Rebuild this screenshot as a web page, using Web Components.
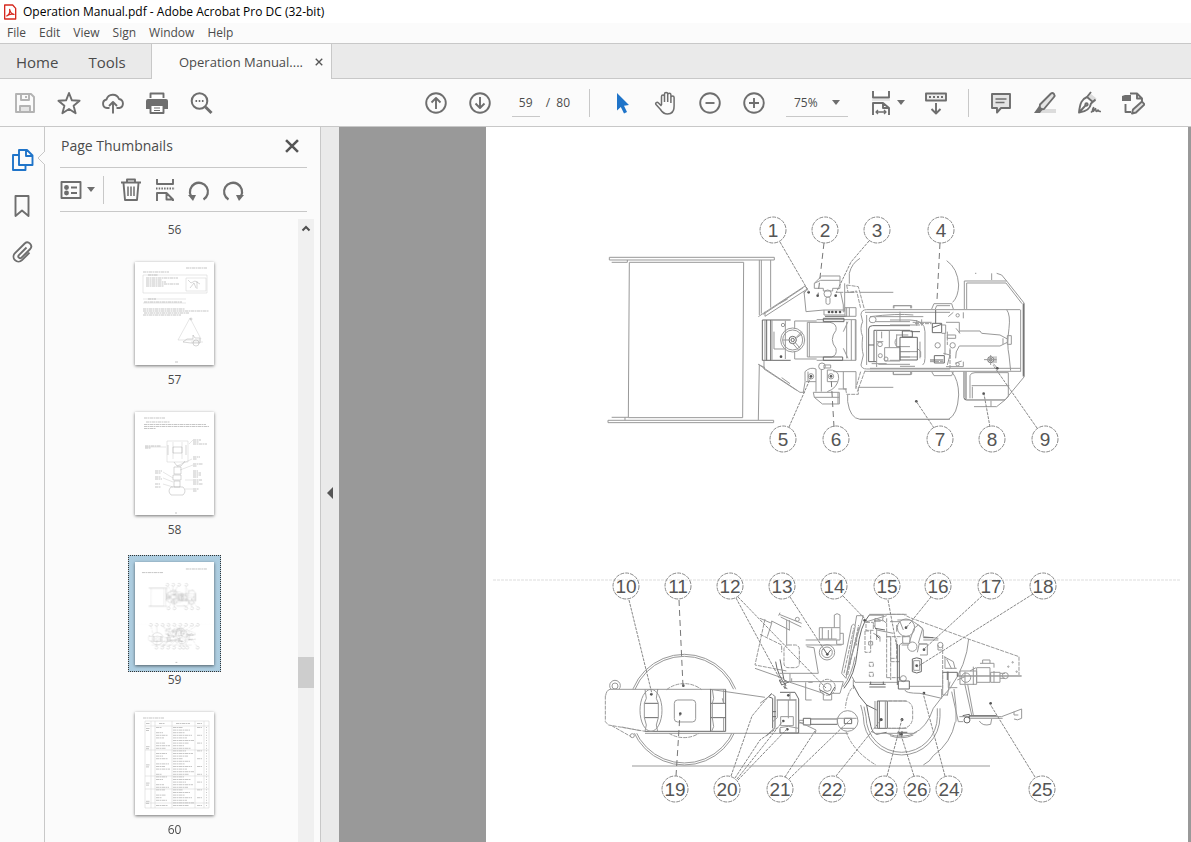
<!DOCTYPE html>
<html lang="en">
<head>
<meta charset="utf-8">
<title>Operation Manual.pdf - Adobe Acrobat Pro DC (32-bit)</title>
<style>
    html, body { margin: 0; height: 100%; }
    body {
        overflow: hidden;
        background: #fff;
        color: #4b4b4b;
        font-family: "Open Sans", "Noto Sans", sans-serif;
        font-size: 12px;
        --line: #c8c8c8;
        --bar: #fbfbfb;
        --grey: #eaeaea;
        --icon: #6e6e6e;
        --blue: #1f74c9;
    }
</style>
</head>
<body>
<reader-app></reader-app>

<script>
// 24x24 icons, stroke = currentColor unless told otherwise
const ICONS = {
    pdf: `<path d="M4 1.5h12l4.500 5V22.500H4z" fill="#fff" stroke="#d6281e" stroke-width="2"/><path d="M7 18c4-2 5-6 4.500-10 1 5 3 7 6.500 7.500-4-1-8 0-11 2.500z" stroke="#d6281e" stroke-width="1.800"/>`,
    save: `<path d="M3 3h15l3 3v15H3z"/><path d="M7 21v-6h10v6z" fill="#e4e4e4"/><path d="M8 3v6h8V3M13 5v2"/>`,
    star: `<path d="M12 2l2.900 7.300 7.700.500-6 5 2 7.500L12 18l-6.600 4.300 2-7.500-6-5 7.700-.500z"/>`,
    cloud: `<path d="M8.500 17H6a4.300 4.300 0 0 1-.500-8.500A6.600 6.600 0 0 1 18 8a4.600 4.600 0 0 1 .500 9h-3M12 22.500V11M8 15l4-4 4 4"/>`,
    print: `<path d="M5.500 7V2.500h13V7" fill="#fff"/><path d="M3 8h18q2 0 2 2v8H1v-8q0-2 2-2z" fill="currentColor" stroke="none"/><path d="M5.500 14h13v8h-13z" fill="#fff"/><path d="M9 17h6M9 19.500h6" stroke-width="1.200"/>`,
    search: `<circle cx="10.500" cy="10" r="7.800" stroke-width="2"/><path d="M16.500 16l6 6" stroke-width="3"/><path d="M6.500 10h1.600M9.700 10h1.600M12.900 10h1.600" stroke-width="1.800"/>`,
    up: `<circle cx="12" cy="12" r="9.800"/><path d="M12 18V7M7.500 11.500L12 7l4.500 4.500"/>`,
    down: `<circle cx="12" cy="12" r="9.800"/><path d="M12 6v11M7.500 12.500L12 17l4.500-4.500"/>`,
    cursor: `<path d="M7 2v17.500l3.800-3.600 3.200 6.600 3-1.500-3-6.300 5-.800z" fill="#1f74c9" stroke="none"/>`,
    hand: `<path d="M7.500 14V5.500a1.500 1.500 0 0 1 3 0V11M10.500 11V3a1.600 1.600 0 0 1 3.200 0v8M13.700 11V3.800a1.600 1.600 0 0 1 3.200 0V12M16.900 12V6.500a1.600 1.600 0 0 1 3.200 0v8.500c0 5-2.600 8-6.600 8-3.500 0-5-1.200-7-4.500L2 13.500c-1-1.600 1-3 2.500-1.500L7.500 15" stroke-width="1.500"/>`,
    minus: `<circle cx="12" cy="12" r="9.800"/><path d="M7.500 12h9"/>`,
    plus: `<circle cx="12" cy="12" r="9.800"/><path d="M7 12h10M12 7v10"/>`,
    fit: `<path d="M4 0v6.500h16V0" fill="#fff"/><path d="M3 9h18" stroke="#e4e4e4" stroke-width="2"/><path d="M4 24V12h10l6 5v7M14 12v5h6" /><path d="M7 21h10M9 19l-2 2 2 2M15 19l2 2-2 2" stroke-width="1.300"/>`,
    scroll: `<path d="M2 2.500h20v7H2z" fill="#eee"/><path d="M5 6h14" stroke-dasharray="2 2" stroke-width="2"/><path d="M12 12v10M7.500 18l4.500 4.500 4.500-4.500"/>`,
    comment: `<path d="M3 3h18v14h-9l-4 4.500V17H3z" fill="#e4e4e4"/><path d="M6.500 8h11M6.500 11.500h9" stroke-width="1.300"/>`,
    marker: `<path d="M8 18h15v4H5z" fill="#dcdcdc" stroke="none"/><path d="M7 13.500L18 2.500q1.500-1 3 .500 1.200 1.500 0 3L11 18l-4.500.500z" fill="#e4e4e4"/><path d="M6 15l4 3-3 4H1z" fill="currentColor" stroke="none"/>`,
    sign: `<path d="M14 3l5.500 4.500-1.500 4-7-6z" fill="#dcdcdc" stroke="none"/><path d="M14 1l-4 5C5 8 3 12 2 21.500c7-1 11-3 12-9l4.500-4M10 6l6.500 5.500M2 21.500l6.500-7"/><path d="M14 21.500c2-2 3-5 2.500-5S15 20.500 16 20.500s2-3 2.500-3 0 3 1 3 1-1.500 1.500-1.500 0 2 3 1.500" stroke-width="1.600"/><circle cx="9.500" cy="13.500" r="1.200"/>`,
    edit: `<path d="M9 2.500h7l5 5V10M16 2.500v5h5M4.500 13v8H10"/><path d="M1 5l3-1h6v6H1z" fill="currentColor" stroke="none"/><path d="M11 22.500l1-4 9-8 2.500 3-8.500 8z" fill="#e4e4e4"/>`,
    pages: `<path d="M9 2h8l5.500 5.500V17H9zM16 2v6h6"/><path d="M9 7H3v15h12.500v-5"/>`,
    bookmark: `<path d="M5.500 2h13v20L12 16.500 5.500 22z"/>`,
    clip: `<path d="M16.500 7.500l-7.600 7.600a1.800 1.800 0 0 0 2.600 2.600l8.700-8.700a3.900 3.900 0 0 0-5.500-5.500L5 13.200a4.900 4.900 0 0 0 7 7l7.500-7.500"/>`,
    close: `<path d="M5.500 5.500l13 13M18.500 5.500l-13 13" stroke-width="2.800"/>`,
    list: `<path d="M2.500 4h19v16h-19z"/><circle cx="7.500" cy="9.500" r="1.500" fill="currentColor"/><circle cx="7.500" cy="15" r="1.500" fill="currentColor"/><path d="M12 9.500h6M12 15h6"/>`,
    trash: `<path d="M2 4.500h20M8 4V1.500h8V4M4.500 5l1.500 17h12L19.500 5"/><path d="M9 8.500v9.500M12 8.500v9.500M15 8.500v9.500" stroke-width="1.500"/>`,
    split: `<path d="M4 1v5h16V1"/><path d="M3 10.500h19" stroke-dasharray="1.500 1.200"/><path d="M4 23v-8h9.500l6.500 6.500h-6.500V15M20 21v2"/>`,
    undo: `<path d="M4 18a9 9 0 1 1 12.500 3.500" stroke-width="2.300"/><path d="M1 17l8 0-3 6z" fill="currentColor" stroke="none"/>`,
    redo: `<path d="M20 18A9 9 0 1 0 7.500 21.500" stroke-width="2.300"/><path d="M23 17l-8 0 3 6z" fill="currentColor" stroke="none"/>`
};

// number, x, y, then leader lines as [points, dashed]
const CALLOUTS = [
    [1, 773, 230, '780,242 809,292'],
    [2, 825, 230, '824,243 818,295', 1],
    [3, 877, 230, '869,241 851,262 836,293'],
    [4, 941, 230, '940,243 937,300', 1],
    [5, 783, 439, '789,427 811,377'],
    [6, 836, 439, '834,427 831,376', 1],
    [7, 940, 439, '934,428 916,401'],
    [8, 992, 439, '990,427 984,394'],
    [9, 1045, 439, '1037,428 993,365'],
    [10, 626, 586, '629,600 652,694'],
    [11, 678, 586, '679,600 683,686', 1],
    [12, 730, 586, '738,597 826,688|736,598 782,683'],
    [13, 782, 586, '790,597 827,654'],
    [14, 834, 586, '843,596 868,622'],
    [15, 887, 586, '888,600 897,648'],
    [16, 938, 586, '931,597 906,628'],
    [17, 991, 586, '982,596 923,650'],
    [18, 1043, 586, '1033,594 917,667'],
    [19, 675, 789, '676,776 680,714', 1],
    [20, 727, 789, '731,776 752,716 768,697|735,778 760,740 777,728|737,779 783,721|738,780 787,729'],
    [21, 780, 789, '785,777 815,731|789,779 851,719'],
    [22, 832, 789, '836,776 881,720'],
    [23, 884, 789, '887,776 902,719'],
    [26, 917, 789, '914,776 901,735'],
    [24, 949, 789, '945,776 923,693'],
    [25, 1042, 789, '1035,777 990,704']
];

const dots = list => list.map(([x, y]) => `<circle class="dot" cx="${x}" cy="${y}" r="4"/>`).join('');

// road roller seen from above
const TOP_VIEW = `
<g transform="translate(600 205) scale(.3333)">
    <path d="M28 157H523V165H28zM88 172H431L428 638H85zM35 172H82V165M478 165V330M484 165V326M512 165V308M478 480L475 645M24 646H521V653H24zM35 637H85M75 637V646"/>
</g>
<g transform="translate(750 205) scale(.3333)">
    <path d="M25 335L165 243L172 252L45 334V320M40 328L160 248M88 296l25-14M25 478L150 562H165M42 468V492L140 556M25 478L45 488M95 518l25 18"/>
    <path class="dark" d="M37 345V466M50 345V466M62 345V466M37 345H122M37 466H122"/>
    <path d="M45 345V466M66 345V466M106 347V462M72 380V432H104"/>
    <circle cx="99" cy="360" r="5"/><circle cx="128" cy="405" r="36"/><circle cx="128" cy="405" r="30"/><circle class="dark" cx="128" cy="405" r="11"/><circle class="dark" cx="128" cy="405" r="5"/>
    <path d="M138 400L158 385M136 413L152 432M118 405H98M140 396L155 380M130 417L146 436"/>
    <path d="M134 372V348H200M134 440V462H200M172 352V456M178 352V456M172 352H240Q262 356 258 376Q236 404 258 430Q262 452 245 456H172M200 344H318V466H200M290 350V460M304 345V466M316 345V466M280 380L294 350M280 430L294 460"/>
    <path class="dark" d="M220 340H282V350H220zM220 456H278V466H220zM225 334H290"/>
    <path d="M162 258L168 320L222 315V330H285M222 315H285M162 265L172 252M193 235L215 213H270V250H248V258H220V250H193zM193 235L212 226H270"/>
    <circle cx="233" cy="266" r="11"/><rect x="228" y="276" width="12" height="22" rx="5"/>
    <path d="M272 262L280 300V322M284 235V320M284 262H312M285 308H318V334H285zM290 308V334M298 308V334M258 262l22 0"/>
    <path class="dash" d="M290 240L325 245L343 312M300 262L320 258L332 310M290 240L294 262H320M345 497L322 560M332 500L318 548M287 552L290 568H325V545"/>
    <path d="M330 262H430M325 547H430M298 236V205Q305 175 330 160"/>
    <circle cx="183" cy="514" r="8"/><circle cx="243" cy="514" r="8"/><circle cx="216" cy="484" r="10"/><rect x="222" y="480" width="20" height="9"/>
    <path d="M165 500Q180 485 198 492V560M165 500Q168 530 160 562M174 500V530M198 530H168M214 494V560M232 530V495Q268 492 266 520Q262 550 232 560M232 530H262M190 562H268V597H217L193 577zM193 577H268M264 562V597M280 500V552H290M250 500H318V552M265 552H290"/>
    <path d="M293 570V590Q300 640 330 643H600M333 328Q335 314 350 314H810M333 328L338 350Q328 370 338 395Q334 430 340 450L333 480Q335 492 350 492H600M345 322H600M345 499H600"/>
    <path class="dark" d="M356 470V372Q356 362 368 362H480M372 470V376H480M356 420H372M356 470H380"/>
    <path d="M380 376V486M380 410H400M418 376V428M404 428H450V468H404zM440 388V425H480M378 335H520M378 350H480M450 440H480M450 456H480M385 478H480M350 330V480M365 476H410M450 320V350M475 390H440M395 380V400"/>
    <rect x="358" y="335" width="20" height="18" rx="8"/><circle cx="390" cy="418" r="7"/><circle cx="391" cy="452" r="6"/><circle cx="408" cy="462" r="6"/>
    <path d="M432 310V302H485V310M430 500V508H485V500"/>
    ${dots([[203, 272], [257, 272], [176, 262], [237, 321], [247, 321], [258, 321], [270, 321], [183, 514], [243, 514], [93, 455]])}
</g>
<g transform="translate(890 205) scale(.3333)">
    <path d="M10 310V302H62V310M125 312L132 296H185L190 312M136 312L140 302H180M10 500V509H62V500M125 500L132 512H185L190 500"/>
    <path d="M170 167Q203 190 206 240Q205 275 188 292M-90 643H175Q203 630 206 570Q206 525 185 500"/>
    <path d="M223 312V228H350L403 295V515L345 585M230 312V234H348L396 296M392 314V500M400 297V512M350 228L335 210L320 205M305 205V225M255 205h4"/>
    <path class="dark" d="M222 500V578Q222 585 230 585H345M228 500V583M400 295V515"/>
    <path d="M240 580V512Q242 503 255 503H355V575L345 585M245 542H358M247 545V580M252 605H320L345 585M303 587V605"/>
    <path d="M350 314Q362 330 357 370Q350 420 357 450L362 497M-60 490H392M-60 499H392"/>
    <path d="M-60 335Q20 325 70 330M0 345H60Q105 345 105 380V460Q105 476 98 480M0 360H90M0 376H30M20 400Q10 412 20 425H30M30 440H82M30 456H82M30 484H75M0 466H30M82 430L92 440V456M90 410V460"/>
    <path class="dark" d="M30 397H82V465H30zM37 378H67V396H37zM62 380H90M127 355H155V383H127zM127 368L155 358M137 315V355M133 452H163V474H133zM120 465H160"/>
    <path d="M155 360H167V385H155M165 385V450M172 390H197V400H172zM180 430V460M160 445L180 450L172 480M68 352H125M80 345V362M95 343V362M168 352H208V385M168 485H220V470M175 335L190 322M220 340V322M195 475L215 468"/>
    <path class="dash" d="M172 380V420M180 435V490M120 470H160M75 356H125"/>
    <path d="M198 370L210 385M210 378L270 378L275 385L330 390L352 402M208 423H330L352 412M208 423Q195 440 197 460M352 392H364V418H352zM339 400V418"/>
    <circle cx="143" cy="421" r="8"/><circle cx="188" cy="421" r="8"/><circle cx="203" cy="331" r="5"/><circle cx="203" cy="478" r="5"/><circle class="dark" cx="302" cy="464" r="9"/><circle class="dark" cx="302" cy="464" r="4"/>
    <path d="M282 464H320M302 450V480M310 476L323 490M312 454v20M318 454v20"/>
    ${dots([[79, 589], [281, 566], [322, 490]])}
</g>`;

// and from the side
const SIDE_VIEW = `
<path class="fold" d="M493 580H1180"/>
<path d="M632 766H990"/>
<g transform="translate(595 565) scale(.3333)">
    <circle cx="268" cy="434" r="166"/><circle cx="268" cy="434" r="160"/>
    <circle cx="60" cy="362" r="16"/><circle cx="60" cy="363" r="9"/>
    <path class="sheet" d="M32 373H445V505H110L32 478z"/>
    <path class="dash" d="M215 374A85 85 0 0 1 320 374M222 505A85 85 0 0 0 312 505"/>
    <path d="M45 373H392M32 392Q34 376 45 373M150 505H760M345 373L510 397"/>
    <path class="dash" d="M31 392V470L40 480L150 499M50 482L108 515M80 486L135 497"/>
    <path class="dark" d="M150 499H392V373M188 373V376M148 415H190M148 458H190M347 415H392M347 458H392M347 373V499"/>
    <path d="M150 373L154 400L148 415V458L154 480L150 499M188 373L184 400L190 415V458L184 480L188 499M352 373L356 400L352 415V458L356 485L350 499M386 373V415L382 400M386 458V499"/>
    <ellipse cx="168" cy="436" rx="33" ry="63"/><circle cx="112" cy="512" r="6"/>
    <rect x="238" y="405" width="64" height="66" rx="10"/>
    ${dots([[169, 388], [265, 362], [256, 446]])}
</g>
<g transform="translate(740 565) scale(.3333)">
    <path d="M118 148L185 175M122 156L184 186M120 143L116 152M140 165V240M148 165V195M60 160L95 175V168L150 196M95 175L82 215M45 310L130 340"/>
    <path class="dash" d="M75 162L45 300L140 318M60 208L125 240V262"/>
    <circle cx="172" cy="163" r="6"/><rect class="dash" x="132" y="240" width="46" height="68" rx="12"/>
    <path class="dark" d="M107 290Q112 330 138 362M120 283L132 345L148 352M118 345L125 360L148 350M135 355V372M125 350H145M130 365l12 6"/>
    <path d="M118 325H235M150 325V352M118 350H310M155 340V350M197 240H305M200 245L222 248L235 325M197 225H238M238 188H300V225H238zM247 188V222M265 195V222M283 188V150Q291 142 300 150V188M240 222H290M290 225V238H310V205H300M275 190V222"/>
    <circle cx="261" cy="262" r="23"/><circle cx="261" cy="262" r="16"/><circle class="dash" cx="262" cy="367" r="24"/><circle cx="262" cy="367" r="12"/>
    <path class="dark" d="M250 250L262 268L272 255M240 375L270 390L285 365"/>
    <path d="M197 352V405H215M205 352H218M250 385V405H275V385H300L310 350M150 352L250 385"/>
    <path class="dark" d="M98 388L105 395V488L80 512M95 385L85 395L98 400V490M98 440H108M98 455H108M120 382H165L176 402V504H120V490M110 405H168"/>
    <path d="M112 405V458L98 470M145 405V460M122 455H160V482H122zM150 382V405M120 488L145 484L175 490M168 402V504M176 466H190M176 474H190M60 415L95 388"/>
    <path class="dark" d="M190 460H212V480H190zM212 462H292M212 478H292M313 460H335V476H313z"/>
    <circle cx="323" cy="468" r="31"/><path d="M290 460H350M300 490H345M292 462V478M176 470L228 495L226 505"/>
    <path d="M305 325L335 182Q340 174 346 182L318 340zM350 152H370L318 330M350 152L345 182M358 185L328 300"/>
    <path class="dash" d="M312 325L342 188M323 330L356 180M350 220V240H340"/>
    <path class="dark" d="M312 370Q345 330 352 260Q360 180 388 150H430"/>
    <path d="M308 366Q336 330 345 275M388 148H500M374 172L440 152M405 160L430 168M345 352H472M336 335L345 352M340 345V372"/>
    <path class="dash" d="M335 370Q320 390 316 430M318 500Q340 560 408 600"/>
    <path class="dark" d="M340 360Q355 395 380 420Q385 450 393 485Q398 504 410 508L440 502M380 420L410 435"/>
    <path class="dash" d="M375 198H392V262H375zM378 172H400V196H378zM440 215H500M440 338V215M440 338H480M388 292H400V304H388zM388 322H400V334H388zM452 215V290H480"/>
    <path d="M400 178L410 195L460 205M405 160V185M400 205L420 215V230M410 195V225M386 230H398V240H386zM450 170H480L490 195M430 150L428 165L440 175"/>
    <path class="dark" d="M388 358H437M388 366H437M392 350V358M430 350V358M412 408H442V490H412zM418 408V490M405 190L435 195M408 210L418 220M402 168H422"/>
    <path d="M436 408V490M405 408V490H412M442 408H500M442 490H500"/>
    ${dots([[145, 391], [130, 468], [142, 493], [424, 464], [486, 464], [374, 166], [262, 268]])}
</g>
<g transform="translate(870 565) scale(.3333)">
    <path d="M-28 420Q-22 440-20 455A115 115 0 0 0 210 455V430M-18 425L-12 455A107 107 0 0 0 202 455V430"/>
    <path d="M190 572A163 163 0 0 0 256 470M160 600Q180 590 190 572M5 500Q15 508 30 505H130Q170 490 190 430Q215 395 240 370Q290 300 296 222"/>
    <path class="dash" d="M50 148H100L120 158L295 222L447 275V330"/>
    <path d="M82 165H120Q150 180 160 195V215L205 220M80 180V200"/>
    <path class="dash" d="M50 160V220M50 215H62V345M62 280H80V220"/>
    <circle cx="108" cy="188" r="26"/><circle cx="127" cy="245" r="14"/><circle cx="100" cy="341" r="9"/><circle cx="211" cy="240" r="8"/>
    <path d="M98 215H120V235H98zM88 240L100 232M118 232L132 190L145 180L158 190L145 235M95 240H115M148 235L142 262M160 225H205M204 240V255H218M118 364H215M105 375Q105 385 150 385L215 400V372"/>
    <path class="dash" d="M218 240V370"/>
    <path class="dark" d="M82 237V360M88 240V345M85 348H118V372H85zM148 237H172M127 282Q140 275 154 282V320Q140 328 127 320zM160 218H190"/>
    <path d="M172 237V270H150M131 287H149V316H131z"/>
    <path d="M222 275L250 290L255 310M225 275V310H260M230 282L245 312M235 320V368H262M240 350L232 392M218 322V390H232M245 380L265 470H280M252 372L258 425M258 425V470"/>
    <path class="dark" d="M218 322H262V335M232 320V345M262 333H455"/>
    <path d="M270 318H320V358H270zM285 320V358M310 305V360M320 308H360V352H320zM330 295H372V308M338 295V285H360V295M362 322H390V352H362zM372 318V352M390 325H405M390 340H405M262 345L285 335M300 318L318 308"/>
    <circle cx="406" cy="332" r="9"/><circle cx="288" cy="338" r="14"/>
    <path d="M285 360L305 450M293 358L310 450M268 455H395L455 432V460Q442 468 432 462M300 460H398M432 440V450H445M328 468Q338 485 362 478L365 462"/>
    <circle class="dark" cx="291" cy="465" r="9"/><path class="dark" d="M278 452L298 448V462M300 452H380"/>
    <path class="dash" d="M55 408H105Q128 412 128 435V462Q122 490 95 490H55"/>
    <path class="dark" d="M82 502H112M88 512V502M96 498V514"/>
    <path d="M50 505Q95 525 140 502M60 512Q95 526 130 510"/>
    ${dots([[108, 188], [162, 254], [140, 302], [162, 384], [96, 464], [362, 415], [33, 464], [94, 508]])}
    <circle cx="428" cy="292" r="2"/><circle cx="440" cy="320" r="2"/><circle cx="415" cy="305" r="2"/>
</g>`;

function callouts(withText) {
    return CALLOUTS.map(([n, x, y, lines, dashed]) => `
        ${lines.split('|').map(p => `<polyline class="${dashed ? 'long' : 'lead'}" points="${p}"/>`).join('')}
        <circle class="ring" cx="${x}" cy="${y}" r="13"/>
        ${withText ? `<text x="${x}" y="${y + 7}">${n}</text>` : ''}`).join('');
}

const DRAWING_CSS = `
    svg { display: block; width: 100%; }
    path, circle, rect, ellipse, polyline { fill: none; stroke: #999; stroke-width: 1; vector-effect: non-scaling-stroke; }
    .dark { stroke: #6a6a6a; }
    .dash { stroke-dasharray: 4 1; }
    .lead { stroke: #888; stroke-dasharray: 3 1; }
    .long { stroke: #777; stroke-dasharray: 6 4; }
    .ring { stroke: #8a8a8a; stroke-dasharray: 4 1; }
    .dot { fill: #555; stroke: none; }
    .sheet { fill: #fff; stroke: none; }
    .fold { stroke: #ddd; stroke-dasharray: 3 1; }
    text { font: 19px "Liberation Sans", Arial, sans-serif; fill: #555; text-anchor: middle; }
`;

// rows of tiny unreadable print for the other thumbnails: [x, y, width]
const print = rows => rows.map(([x, y, w]) => `<path class="print" d="M${x} ${y}h${w}"/>`).join('');

function pageTable() {
    let out = '<path class="rule" d="M10 9H74M10 14H74M10 9V96H74V9M16 9V96M20 9V96M37 9V96M60 9V96M69 9V96M10 38H74M10 64H74M10 77H74M10 91H74"/>';
    const rows = [[8, 6, 21], [11, 11.5, 4], [24, 11.5, 6], [41, 11.5, 14], [62, 11.5, 5]];
    for (let i = 0; i < 31; i++) {
        const y = 15.5 + i * 2.6;
        rows.push([38, y, 10 + (i * 7) % 12], [71, y, 1]);
        if (i % 4 != 1) rows.push([21, y, 6 + (i * 5) % 9]);
        if (i % 3 == 0) rows.push([62, y, 5]);
        if (i % 7 == 0) rows.push([11, y + 1, 4], [11, y + 3, 3]);
    }
    return out + print(rows);
}

const THUMBS = {
    57: `<path class="rule" d="M8 13H72V31H8zM51 16H71V29H51zM8 37H51M8 41H51M55 56L43 78M55 56L66 77M43 78H66M56 80H68"/>
        <path class="sketch" d="M53 18l3 3 4-2 5 3M55 26l4-5 2 5M62 19v8M48 80l4-3h6v-4l2 3h5v5h-9z"/><circle class="sketch" cx="61" cy="81" r="3"/><circle class="sketch" cx="56" cy="57" r="1"/>`
        + print([[51, 6, 21], [8, 10, 26], [13, 13, 10], [11, 16, 32], [11, 18, 16], [11, 20, 20], [11, 22, 33], [11, 24, 18], [13, 37, 8], [9, 40, 38], [8, 47, 42], [8, 49, 66], [9, 51, 45], [8, 53, 38], [40, 100, 3]]),
    58: `<path class="rule" d="M32 29H53V50H32zM38 30V47M47 30V47M10 35H31M54 32L58 28M42 54L57 47M45 58L58 53M28 60L38 66M28 66L38 70M28 72L38 75M50 77H58M50 68H58"/>
        <path class="sketch" d="M33 33v10M51 33v10M38 35h9v6h-9zM39 50l3 4h4l4-5M39 55h7v7h-7zM38 63h8v5h-8zM39 69h6v6h-6zM36 75h12q4 4 0 8H36q-4-4 0-8z"/>`
        + print([[9, 6, 21], [11, 10, 24], [9, 12.5, 62], [9, 14.5, 65], [9, 16.5, 12], [58, 28, 8], [58, 30, 6], [58, 32, 14], [10, 34, 16], [10, 36, 6], [58, 45, 7], [58, 47, 4], [58, 52, 10], [58, 54, 4], [58, 59, 5], [58, 61, 8], [58, 63, 8], [58, 65, 5], [58, 68, 9], [58, 70, 6], [58, 72, 10], [58, 77, 6], [58, 79, 4], [20, 59, 7], [20, 61, 6], [20, 65, 6], [20, 67, 7], [20, 72, 5], [20, 75, 6], [40, 101, 2]]),
    60: pageTable()
};

class AppIcon extends HTMLElement {
    connectedCallback() {
        if (this.shadowRoot) return;
        this.attachShadow({mode: 'open'});
        this.shadowRoot.innerHTML = `
    <style>
        :host { display: block; flex: none; width: var(--icon-size, 24px); height: var(--icon-size, 24px); }
        svg { display: block; width: 100%; height: 100%; fill: none; stroke: currentColor; stroke-width: 1.9; stroke-linejoin: round; }
    </style>
    <svg viewBox="0 0 24 24" aria-hidden="true">${ICONS[this.getAttribute('name')]}</svg>`;
    }
}

class IconButton extends HTMLElement {
    connectedCallback() {
        if (this.shadowRoot) return;
        this.attachShadow({mode: 'open'});
        this.shadowRoot.innerHTML = `
    <style>
        :host { display: block; color: var(--icon); }
        button {
            display: flex;
            align-items: center;
            justify-content: center;
            width: 100%;
            height: 100%;
            padding: 0;
            border: 0;
            gap: 4px;
            background: none;
            color: inherit;
            cursor: pointer;
        }
        .caret { border: 4px solid transparent; border-top: 5px solid currentColor; border-bottom: 0; }
    </style>
    <button type="button" aria-label="${this.getAttribute('label')}">
        <app-icon name="${this.getAttribute('icon')}"></app-icon>
        ${this.hasAttribute('menu') ? '<span class="caret"></span>' : ''}
    </button>`;
    }
}

class TitleBar extends HTMLElement {
    constructor() {
        super();
        this.attachShadow({mode: 'open'});
        this.shadowRoot.innerHTML = `
    <style>
        :host { display: flex; align-items: center; height: 23px; padding-left: 2px; gap: 5px; background: #fff; color: #000; --icon-size: 16px; }
    </style>
    <app-icon name="pdf"></app-icon><span><slot></slot></span>`;
    }
}

class MenuBar extends HTMLElement {
    constructor() {
        super();
        this.attachShadow({mode: 'open'});
        this.shadowRoot.innerHTML = `
    <style>
        :host { display: flex; align-items: flex-start; height: 20px; padding-left: 7px; gap: 13px; background: var(--bar); }
        button { padding: 0; border: 0; background: none; font: inherit; line-height: 20px; color: inherit; }
    </style>
    ${['File', 'Edit', 'View', 'Sign', 'Window', 'Help'].map(t => `<button type="button">${t}</button>`).join('')}`;
    }
}

class TabStrip extends HTMLElement {
    constructor() {
        super();
        this.attachShadow({mode: 'open'});
        this.shadowRoot.innerHTML = `
    <style>
        :host { display: flex; height: 35px; border-top: 1px solid var(--line); background: var(--grey); box-shadow: inset 0 -1px var(--line); }
        button { border: 0; background: none; font: inherit; font-size: 13px; color: inherit; }
        nav { display: flex; min-width: 151px; }
        nav button { padding: 0 14px 0 16px; font-size: 15px; }
        .tab { display: flex; align-items: center; border: 1px solid var(--line); border-width: 0 1px; background: var(--bar); padding: 0 6px 0 27px; gap: 10px; }
        .tab button { padding: 0; }
        .x { width: 12px; height: 12px; --icon: #555; --icon-size: 12px; }
    </style>
    <nav><button type="button">Home</button><button type="button">Tools</button></nav>
    <div class="tab"><button type="button">Operation Manual....</button><icon-button class="x" icon="close" label="Close tab"></icon-button></div>`;
    }
}

class ToolBar extends HTMLElement {
    constructor() {
        super();
        this.attachShadow({mode: 'open'});
        this.shadowRoot.innerHTML = `
    <style>
        :host { display: flex; justify-content: space-between; height: 47px; padding: 0 36px 0 3px; border-bottom: 1px solid var(--line); background: var(--bar); }
        div { display: flex; align-items: center; }
        icon-button { width: 44px; height: 44px; }
        icon-button[menu] { width: 54px; margin-left: 8px; }
        icon-button[icon="save"] { --icon: #b3b3b3; }
        icon-button[icon="cursor"] { margin-left: 10px; }
        input, select { height: 28px; border: 0; border-bottom: 1px solid var(--line); border-radius: 0; background: none; font: inherit; color: inherit; box-sizing: border-box; }
        input { width: 28px; padding: 0; margin: 0 6px 0 10px; text-align: center; }
        select { appearance: none; width: 62px; padding: 0 8px; }
        .zoom { position: relative; margin: 0 4px 0 10px; }
        .zoom::after { content: ""; position: absolute; right: 8px; border: 4px solid transparent; border-top: 5px solid var(--icon); border-bottom: 0; pointer-events: none; }
        i { width: 1px; height: 28px; background: var(--line); }
        .gap { margin: 0 10px; }
        .count { white-space: pre; margin-right: 19px; }
    </style>
    <div>
        <icon-button icon="save" label="Save"></icon-button>
        <icon-button icon="star" label="Star"></icon-button>
        <icon-button icon="cloud" label="Upload"></icon-button>
        <icon-button icon="print" label="Print"></icon-button>
        <icon-button icon="search" label="Find"></icon-button>
    </div>
    <div>
        <icon-button icon="up" label="Previous page"></icon-button>
        <icon-button icon="down" label="Next page"></icon-button>
        <input aria-label="Page number" value="59">
        <span class="count">/  80</span>
        <i></i>
        <icon-button icon="cursor" label="Select"></icon-button>
        <icon-button icon="hand" label="Hand"></icon-button>
        <icon-button icon="minus" label="Zoom out"></icon-button>
        <icon-button icon="plus" label="Zoom in"></icon-button>
        <div class="zoom"><select aria-label="Zoom"><option>75%</option><option>100%</option></select></div>
        <icon-button icon="fit" label="Fit width" menu></icon-button>
        <icon-button icon="scroll" label="Scrolling"></icon-button>
        <i class="gap"></i>
        <icon-button icon="comment" label="Comment"></icon-button>
        <icon-button icon="marker" label="Highlight"></icon-button>
        <icon-button icon="sign" label="Sign"></icon-button>
        <icon-button icon="edit" label="Edit"></icon-button>
    </div>`;
    }
}

class SideRail extends HTMLElement {
    constructor() {
        super();
        this.attachShadow({mode: 'open'});
        this.shadowRoot.innerHTML = `
    <style>
        :host { display: flex; flex-direction: column; position: relative; box-sizing: border-box; flex: none; width: 45px; padding-top: 10px; border-right: 1px solid var(--line); background: var(--bar); }
        icon-button { height: 46px; }
        .on { --icon: var(--blue); }
        .notch { position: absolute; right: -1px; top: 24px; }
    </style>
    <icon-button class="on" icon="pages" label="Page thumbnails"></icon-button>
    <icon-button icon="bookmark" label="Bookmarks"></icon-button>
    <icon-button icon="clip" label="Attachments"></icon-button>
    <svg class="notch" width="8" height="14"><path d="M8 0L1 7l7 7" fill="#fbfbfb" stroke="#c8c8c8"/></svg>`;
    }
}

class PageThumb extends HTMLElement {
    connectedCallback() {
        if (this.shadowRoot) return;
        const page = this.getAttribute('page');
        const current = this.hasAttribute('current');
        this.attachShadow({mode: 'open'});
        this.shadowRoot.innerHTML = `
    <style>
        :host { display: flex; flex-direction: column; align-items: center; line-height: 16px; }
        .frame { box-sizing: border-box; width: 93px; height: 117px; padding: 6px; border: 1px solid transparent; }
        :host([current]) .frame { background: #adcde0; border: 1px dotted #333; }
        .sheet-box { height: 103px; background: #fff; box-shadow: 0 1px 3px rgba(0, 0, 0, .55); overflow: hidden; }
        ${DRAWING_CSS}
        svg { height: 100%; }
        path, circle, rect, ellipse, polyline { stroke-width: .2; }
        .drawing { opacity: .7; }
        .dot { fill: none; }
        .ring { stroke-width: .6; stroke: #bbb; }
        .fold { stroke: #eee; }
        .rule { stroke: #ccc; stroke-width: .5; }
        .sketch { stroke: #999; stroke-width: .4; }
        .print { stroke: #a0a0a0; stroke-width: .6; stroke-dasharray: 3 .5 2 .5; }
    </style>
    <div class="frame"><div class="sheet-box">${current
        ? `<svg viewBox="486 30 702 911"><g class="drawing">${TOP_VIEW}${SIDE_VIEW}${callouts(false)}</g><path class="print" d="M938 90H1125M548 122H735M846 920H862"/></svg>`
        : `<svg viewBox="0 0 79 103">${THUMBS[page]}</svg>`}</div></div>
    <slot></slot>`;
    }
}

class ThumbnailPanel extends HTMLElement {
    constructor() {
        super();
        this.attachShadow({mode: 'open'});
        this.shadowRoot.innerHTML = `
    <style>
        :host { display: flex; flex-direction: column; box-sizing: border-box; flex: none; width: 276px; border-right: 1px solid var(--line); background: var(--bar); }
        header, .tools { display: flex; align-items: center; margin: 0 13px 0 15px; border-bottom: 1px solid var(--line); }
        header { height: 40px; justify-content: space-between; line-height: 18px; }
        h2 { margin: 0 0 2px 1px; font-size: 14px; font-weight: 400; }
        header icon-button { width: 30px; height: 30px; margin-bottom: 2px; --icon: #555; --icon-size: 22px; }
        .tools { height: 43px; }
        .tools icon-button { width: 34px; height: 34px; }
        .tools icon-button[menu] { margin-right: 9px; }
        i { width: 1px; height: 28px; margin-right: 10px; background: var(--line); }
        .body { display: flex; flex: 1; min-height: 0; }
        .list { display: flex; flex: 1; flex-direction: column; gap: 17px; padding: 10px 0 0 6px; overflow: hidden; text-align: center; line-height: 16px; }
        .bar { display: flex; flex-direction: column; align-items: stretch; width: 16px; margin: 7px 6px 0 0; background: #f0f0f0; }
        .bar svg { display: block; height: 20px; }
        .bar b { flex: 31; background: #cdcdcd; }
        .above { flex: 418; }
        .below { flex: 154; }
    </style>
    <header><h2>Page Thumbnails</h2><icon-button icon="close" label="Close panel"></icon-button></header>
    <div class="tools">
        <icon-button icon="list" label="Options" menu></icon-button><i></i>
        <icon-button icon="trash" label="Delete"></icon-button>
        <icon-button icon="split" label="Split"></icon-button>
        <icon-button icon="undo" label="Rotate left"></icon-button>
        <icon-button icon="redo" label="Rotate right"></icon-button>
    </div>
    <div class="body">
        <div class="list"><slot></slot></div>
        <div class="bar">
            <svg viewBox="0 0 16 20"><path d="M4.500 11.500L8 8l3.500 3.500" fill="none" stroke="#505050" stroke-width="2"/></svg>
            <span class="above"></span><b></b><span class="below"></span>
        </div>
    </div>`;
    }
}

class DocumentView extends HTMLElement {
    constructor() {
        super();
        this.attachShadow({mode: 'open'});
        this.shadowRoot.innerHTML = `
    <style>
        :host { display: flex; flex: 1; min-width: 0; background: #999; }
        .gutter { display: flex; flex: none; width: 18px; padding: 17px 0 0; background: var(--grey); border: 0; align-items: center; justify-content: center; }
        .gutter span { border: 6px solid transparent; border-right-color: #555; border-left: 0; }
        .page { flex: 1; min-width: 0; margin: 0 3px 0 147px; background: #fff; overflow: hidden; }
        ${DRAWING_CSS}
    </style>
    <button class="gutter" type="button" aria-label="Collapse panel"><span></span></button>
    <div class="page"><svg viewBox="486 127 702 715">${TOP_VIEW}${SIDE_VIEW}${callouts(true)}</svg></div>`;
    }
}

class ReaderApp extends HTMLElement {
    constructor() {
        super();
        this.attachShadow({mode: 'open'});
        this.shadowRoot.innerHTML = `
    <style>
        :host { display: flex; flex-direction: column; height: 100vh; }
        title-bar, menu-bar, tab-strip, tool-bar { flex: none; }
        main { display: flex; flex: 1; min-height: 0; }
    </style>
    <title-bar>Operation Manual.pdf - Adobe Acrobat Pro DC (32-bit)</title-bar>
    <menu-bar></menu-bar>
    <tab-strip></tab-strip>
    <tool-bar></tool-bar>
    <main>
        <side-rail></side-rail>
        <thumbnail-panel>
            <span>56</span>
            <page-thumb page="57">57</page-thumb>
            <page-thumb page="58">58</page-thumb>
            <page-thumb page="59" current>59</page-thumb>
            <page-thumb page="60">60</page-thumb>
        </thumbnail-panel>
        <document-view></document-view>
    </main>`;
    }
}

customElements.define('app-icon', AppIcon);
customElements.define('icon-button', IconButton);
customElements.define('title-bar', TitleBar);
customElements.define('menu-bar', MenuBar);
customElements.define('tab-strip', TabStrip);
customElements.define('tool-bar', ToolBar);
customElements.define('side-rail', SideRail);
customElements.define('page-thumb', PageThumb);
customElements.define('thumbnail-panel', ThumbnailPanel);
customElements.define('document-view', DocumentView);
customElements.define('reader-app', ReaderApp);
</script>
</body>
</html>
